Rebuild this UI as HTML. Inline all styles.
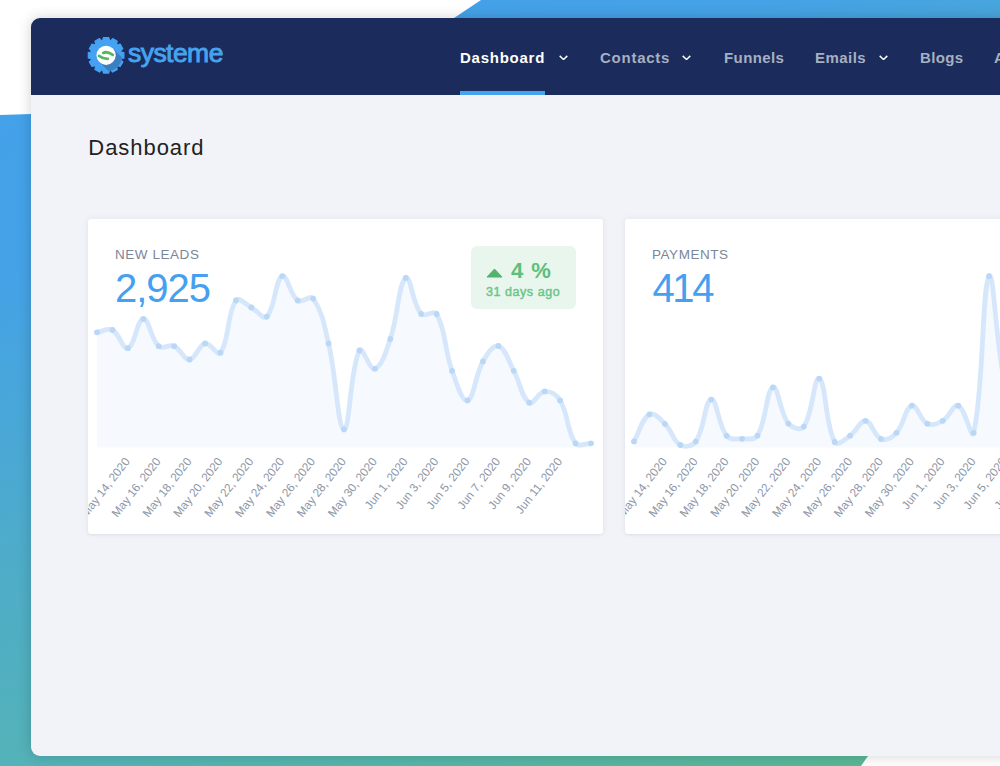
<!DOCTYPE html>
<html><head><meta charset="utf-8">
<style>
*{margin:0;padding:0;box-sizing:border-box}
html,body{width:1000px;height:766px;overflow:hidden;background:#fff;font-family:"Liberation Sans",sans-serif;position:relative}
.abs{position:absolute;white-space:nowrap;line-height:1}
.bg{position:absolute;left:0;top:0;width:1000px;height:766px;
  background:linear-gradient(160deg,#42a0ec 0%,#45a2e6 25%,#4eacc9 50%,#55b4b4 72%,#5ab891 100%);
  clip-path:polygon(481px 0,1000px 0,1000px 640px,868px 756px,861px 766px,0 766px,0 115px,31px 114px,454px 18px)}
.win{position:absolute;left:31px;top:18px;width:1200px;height:738px;background:#f1f3f8;border-radius:9px;overflow:hidden;
  box-shadow:0 0 14px rgba(0,0,0,0.18)}
.hdr{position:absolute;left:0;top:0;width:100%;height:76.5px;background:#1b2b5b}
.brand{font-size:26.5px;font-weight:normal;color:#46a3f0;letter-spacing:-0.55px;-webkit-text-stroke:0.9px #46a3f0}
.nav{font-size:15px;font-weight:bold;color:#a6b0c2;letter-spacing:0.75px}
.nav.act{color:#fff}
.chev{position:absolute;width:9px;height:5px}
.uline{position:absolute;left:459.8px;top:91px;width:85.4px;height:3.5px;background:#46a3f0}
.title{font-size:22px;color:#222;letter-spacing:0.95px}
.card{position:absolute;top:218.5px;width:514.5px;height:315px;background:#fff;border-radius:3px;box-shadow:0 0 6px rgba(30,45,80,0.07),0 1px 2px rgba(30,45,80,0.05)}
.clbl{font-size:13.5px;color:#7b8699;letter-spacing:0.55px}
.cval{font-size:40px;color:#46a0ef;letter-spacing:-1px}
.badge{position:absolute;left:471px;top:245.5px;width:105px;height:63px;background:#e8f6ee;border-radius:6px}
.pct{font-size:22px;font-weight:bold;color:#5cbf7a;letter-spacing:1px}
.ago{font-size:12.5px;font-weight:normal;color:#6cc588;letter-spacing:0.55px;-webkit-text-stroke:0.45px #6cc588}
svg.ch{position:absolute;left:0;top:0}
.lbl text{font-size:11.8px;fill:#8d97a8;font-family:"Liberation Sans",sans-serif}
</style></head><body>
<div class="bg"></div>
<div class="win"><div class="hdr"></div></div>
<svg class="abs" style="left:87px;top:36px" width="38" height="38" viewBox="0 0 38 38">
  <defs><clipPath id="gclip"><circle cx="19.10" cy="19.30" r="16.2"/></clipPath></defs>
  <path d="M15.52 4.94 L16.44 1.50 L21.76 1.50 L22.68 4.94 L23.18 5.07 L25.70 2.55 L30.31 5.21 L29.38 8.65 L29.75 9.02 L33.19 8.09 L35.85 12.70 L33.33 15.22 L33.46 15.72 L36.90 16.64 L36.90 21.96 L33.46 22.88 L33.33 23.38 L35.85 25.90 L33.19 30.51 L29.75 29.58 L29.38 29.95 L30.31 33.39 L25.70 36.05 L23.18 33.53 L22.68 33.66 L21.76 37.10 L16.44 37.10 L15.52 33.66 L15.02 33.53 L12.50 36.05 L7.89 33.39 L8.82 29.95 L8.45 29.58 L5.01 30.51 L2.35 25.90 L4.87 23.38 L4.74 22.88 L1.30 21.96 L1.30 16.64 L4.74 15.72 L4.87 15.22 L2.35 12.70 L5.01 8.09 L8.45 9.02 L8.82 8.65 L7.89 5.21 L12.50 2.55 L15.02 5.07Z" fill="#45a1f1" stroke="#45a1f1" stroke-width="1.2" stroke-linejoin="round"/>
  <path d="M12.31 26.09 L25.89 12.51 L40.03 26.65 L26.45 40.23 Z" fill="#3b7fc0" clip-path="url(#gclip)"/>
  <circle cx="19.10" cy="19.30" r="9.6" fill="#fff"/>
  <path d="M16.2 16.9 C18.8 15.6 22.5 16.6 25.8 18.8" fill="none" stroke="#55b85e" stroke-width="2.8" stroke-linecap="round"/>
  <path d="M12.0 19.9 C14.5 21.8 17.5 22.9 20.8 22.8" fill="none" stroke="#55b85e" stroke-width="2.8" stroke-linecap="round"/>
</svg>
<div class="abs brand" id="brand" style="left:128px;top:40px">systeme</div>
<div class="abs nav act" id="n1" style="left:460px;top:50px">Dashboard</div>
<svg class="chev" style="left:558.8px;top:55px" viewBox="0 0 9 5"><path d="M.7 .9L4.5 4.5L8.3 .9" fill="none" stroke="#fff" stroke-width="1.45"/></svg>
<div class="abs nav" id="n2" style="left:600px;top:50px">Contacts</div>
<svg class="chev" style="left:682px;top:55px" viewBox="0 0 9 5"><path d="M.7 .9L4.5 4.5L8.3 .9" fill="none" stroke="#fff" stroke-width="1.45"/></svg>
<div class="abs nav" id="n3" style="left:724px;top:50px;letter-spacing:0.4px">Funnels</div>
<div class="abs nav" id="n4" style="left:815px;top:50px;letter-spacing:0.45px">Emails</div>
<svg class="chev" style="left:878.5px;top:55px" viewBox="0 0 9 5"><path d="M.7 .9L4.5 4.5L8.3 .9" fill="none" stroke="#fff" stroke-width="1.45"/></svg>
<div class="abs nav" id="n5" style="left:920px;top:50px;letter-spacing:0.35px">Blogs</div>
<div class="abs nav" id="n6" style="left:994px;top:50px">A</div>
<div class="uline"></div>
<div class="abs title" id="title" style="left:88.3px;top:137px">Dashboard</div>
<div class="card" style="left:88px"></div>
<div class="card" style="left:625px"></div>
<div class="abs clbl" id="l1" style="left:115px;top:248px">NEW LEADS</div>
<div class="abs cval" id="v1" style="left:115px;top:267.5px">2,925</div>
<div class="badge"></div>
<svg class="abs" style="left:486px;top:268px" width="17" height="10" viewBox="0 0 17 10"><path d="M8.5 1L16 9H1Z" fill="#52b270" stroke="#52b270" stroke-width="1" stroke-linejoin="round"/></svg>
<div class="abs pct" id="pct" style="left:511px;top:260px">4 %</div>
<div class="abs ago" id="ago" style="left:486px;top:286px">31 days ago</div>
<div class="abs clbl" id="l2" style="left:652px;top:248px">PAYMENTS</div>
<div class="abs cval" id="v2" style="left:652.5px;top:267.5px;letter-spacing:-2.4px">414</div>
<svg class="ch" width="1000" height="766">
<defs><clipPath id="c1"><rect x="88" y="218" width="514" height="315"/></clipPath><clipPath id="c2"><rect x="625" y="218" width="514" height="315"/></clipPath></defs>
<g clip-path="url(#c1)"><path d="M97.00 332.30 C103.17 331.38 107.55 327.49 112.44 330.00 C119.90 333.85 122.69 350.05 127.88 348.20 C135.04 345.65 136.97 319.41 143.31 319.00 C149.32 318.61 150.48 338.92 158.75 346.20 C162.83 349.80 168.86 343.91 174.19 346.20 C181.21 349.23 183.72 360.02 189.62 359.50 C196.07 358.94 198.23 345.00 205.06 343.50 C210.58 342.28 217.43 356.97 220.50 352.70 C229.78 339.77 226.52 314.29 235.94 300.50 C238.87 296.21 245.37 304.37 251.38 307.50 C257.72 310.81 263.19 320.27 266.81 316.60 C275.54 307.75 274.84 280.07 282.25 276.20 C287.19 273.63 289.67 294.68 297.69 300.50 C302.02 303.64 310.08 294.36 313.12 298.60 C322.43 311.56 324.21 325.07 328.56 343.50 C336.56 377.39 337.57 427.94 344.00 429.40 C349.92 430.74 349.92 369.18 359.44 350.50 C362.27 344.94 369.73 370.72 374.88 368.80 C382.08 366.12 386.02 351.63 390.31 339.00 C398.37 315.31 398.14 284.16 405.75 278.00 C410.49 274.16 412.33 303.67 421.19 314.00 C424.68 318.07 434.06 309.28 436.62 314.00 C446.41 332.00 444.18 348.75 452.06 370.80 C456.53 383.31 462.02 402.05 467.50 400.40 C474.37 398.33 474.83 375.79 482.94 361.50 C487.18 354.03 493.09 344.41 498.38 346.00 C505.44 348.13 508.23 360.55 513.81 370.80 C520.58 383.23 521.23 397.35 529.25 402.70 C533.58 405.59 538.30 391.88 544.69 391.40 C550.65 390.96 556.65 394.55 560.12 400.40 C569.00 415.31 566.34 430.48 575.56 443.30 C578.69 447.50 584.83 443.30 591.00 443.30 L591.00 447.50 L97.00 447.50 Z" fill="#f6f9fe"/><path d="M97.00 332.30 C103.17 331.38 107.55 327.49 112.44 330.00 C119.90 333.85 122.69 350.05 127.88 348.20 C135.04 345.65 136.97 319.41 143.31 319.00 C149.32 318.61 150.48 338.92 158.75 346.20 C162.83 349.80 168.86 343.91 174.19 346.20 C181.21 349.23 183.72 360.02 189.62 359.50 C196.07 358.94 198.23 345.00 205.06 343.50 C210.58 342.28 217.43 356.97 220.50 352.70 C229.78 339.77 226.52 314.29 235.94 300.50 C238.87 296.21 245.37 304.37 251.38 307.50 C257.72 310.81 263.19 320.27 266.81 316.60 C275.54 307.75 274.84 280.07 282.25 276.20 C287.19 273.63 289.67 294.68 297.69 300.50 C302.02 303.64 310.08 294.36 313.12 298.60 C322.43 311.56 324.21 325.07 328.56 343.50 C336.56 377.39 337.57 427.94 344.00 429.40 C349.92 430.74 349.92 369.18 359.44 350.50 C362.27 344.94 369.73 370.72 374.88 368.80 C382.08 366.12 386.02 351.63 390.31 339.00 C398.37 315.31 398.14 284.16 405.75 278.00 C410.49 274.16 412.33 303.67 421.19 314.00 C424.68 318.07 434.06 309.28 436.62 314.00 C446.41 332.00 444.18 348.75 452.06 370.80 C456.53 383.31 462.02 402.05 467.50 400.40 C474.37 398.33 474.83 375.79 482.94 361.50 C487.18 354.03 493.09 344.41 498.38 346.00 C505.44 348.13 508.23 360.55 513.81 370.80 C520.58 383.23 521.23 397.35 529.25 402.70 C533.58 405.59 538.30 391.88 544.69 391.40 C550.65 390.96 556.65 394.55 560.12 400.40 C569.00 415.31 566.34 430.48 575.56 443.30 C578.69 447.50 584.83 443.30 591.00 443.30" fill="none" stroke="#d6e7fc" stroke-width="4.8" stroke-linejoin="round" stroke-linecap="round"/><circle cx="97.00" cy="332.30" r="2.9" fill="#bad7f5"/><circle cx="112.44" cy="330.00" r="2.9" fill="#bad7f5"/><circle cx="127.88" cy="348.20" r="2.9" fill="#bad7f5"/><circle cx="143.31" cy="319.00" r="2.9" fill="#bad7f5"/><circle cx="158.75" cy="346.20" r="2.9" fill="#bad7f5"/><circle cx="174.19" cy="346.20" r="2.9" fill="#bad7f5"/><circle cx="189.62" cy="359.50" r="2.9" fill="#bad7f5"/><circle cx="205.06" cy="343.50" r="2.9" fill="#bad7f5"/><circle cx="220.50" cy="352.70" r="2.9" fill="#bad7f5"/><circle cx="235.94" cy="300.50" r="2.9" fill="#bad7f5"/><circle cx="251.38" cy="307.50" r="2.9" fill="#bad7f5"/><circle cx="266.81" cy="316.60" r="2.9" fill="#bad7f5"/><circle cx="282.25" cy="276.20" r="2.9" fill="#bad7f5"/><circle cx="297.69" cy="300.50" r="2.9" fill="#bad7f5"/><circle cx="313.12" cy="298.60" r="2.9" fill="#bad7f5"/><circle cx="328.56" cy="343.50" r="2.9" fill="#bad7f5"/><circle cx="344.00" cy="429.40" r="2.9" fill="#bad7f5"/><circle cx="359.44" cy="350.50" r="2.9" fill="#bad7f5"/><circle cx="374.88" cy="368.80" r="2.9" fill="#bad7f5"/><circle cx="390.31" cy="339.00" r="2.9" fill="#bad7f5"/><circle cx="405.75" cy="278.00" r="2.9" fill="#bad7f5"/><circle cx="421.19" cy="314.00" r="2.9" fill="#bad7f5"/><circle cx="436.62" cy="314.00" r="2.9" fill="#bad7f5"/><circle cx="452.06" cy="370.80" r="2.9" fill="#bad7f5"/><circle cx="467.50" cy="400.40" r="2.9" fill="#bad7f5"/><circle cx="482.94" cy="361.50" r="2.9" fill="#bad7f5"/><circle cx="498.38" cy="346.00" r="2.9" fill="#bad7f5"/><circle cx="513.81" cy="370.80" r="2.9" fill="#bad7f5"/><circle cx="529.25" cy="402.70" r="2.9" fill="#bad7f5"/><circle cx="544.69" cy="391.40" r="2.9" fill="#bad7f5"/><circle cx="560.12" cy="400.40" r="2.9" fill="#bad7f5"/><circle cx="575.56" cy="443.30" r="2.9" fill="#bad7f5"/><circle cx="591.00" cy="443.30" r="2.9" fill="#bad7f5"/><g class="lbl"><text transform="translate(127.08 459.00) rotate(-52.00)" text-anchor="end" dy="0.36em">May 14, 2020</text><text transform="translate(157.95 459.00) rotate(-52.00)" text-anchor="end" dy="0.36em">May 16, 2020</text><text transform="translate(188.82 459.00) rotate(-52.00)" text-anchor="end" dy="0.36em">May 18, 2020</text><text transform="translate(219.70 459.00) rotate(-52.00)" text-anchor="end" dy="0.36em">May 20, 2020</text><text transform="translate(250.57 459.00) rotate(-52.00)" text-anchor="end" dy="0.36em">May 22, 2020</text><text transform="translate(281.45 459.00) rotate(-52.00)" text-anchor="end" dy="0.36em">May 24, 2020</text><text transform="translate(312.32 459.00) rotate(-52.00)" text-anchor="end" dy="0.36em">May 26, 2020</text><text transform="translate(343.20 459.00) rotate(-52.00)" text-anchor="end" dy="0.36em">May 28, 2020</text><text transform="translate(374.07 459.00) rotate(-52.00)" text-anchor="end" dy="0.36em">May 30, 2020</text><text transform="translate(404.95 459.00) rotate(-52.00)" text-anchor="end" dy="0.36em">Jun 1, 2020</text><text transform="translate(435.82 459.00) rotate(-52.00)" text-anchor="end" dy="0.36em">Jun 3, 2020</text><text transform="translate(466.70 459.00) rotate(-52.00)" text-anchor="end" dy="0.36em">Jun 5, 2020</text><text transform="translate(497.57 459.00) rotate(-52.00)" text-anchor="end" dy="0.36em">Jun 7, 2020</text><text transform="translate(528.45 459.00) rotate(-52.00)" text-anchor="end" dy="0.36em">Jun 9, 2020</text><text transform="translate(559.33 459.00) rotate(-52.00)" text-anchor="end" dy="0.36em">Jun 11, 2020</text></g></g><g clip-path="url(#c2)"><path d="M634.00 441.40 C640.17 430.60 641.63 418.85 649.44 414.40 C653.98 411.81 659.84 418.81 664.88 423.80 C672.19 431.05 672.61 440.56 680.31 445.00 C684.96 447.50 692.53 446.34 695.75 441.60 C704.88 428.18 704.62 400.83 711.19 399.60 C716.97 398.51 717.80 424.60 726.62 435.80 C730.15 440.28 735.90 438.84 742.06 438.80 C748.25 438.76 754.57 440.48 757.50 435.60 C766.92 419.92 765.99 390.10 772.94 387.40 C778.34 385.30 779.55 412.40 788.38 423.60 C791.90 428.08 800.88 430.88 803.81 426.60 C813.23 412.88 813.87 375.91 819.25 378.60 C826.22 382.07 824.85 423.81 834.69 442.00 C837.20 446.65 844.72 439.41 850.12 435.70 C857.07 430.93 859.71 420.19 865.56 420.80 C872.06 421.47 873.73 436.07 881.00 438.90 C886.08 440.87 892.15 437.41 896.44 432.80 C904.50 424.13 904.86 407.77 911.88 405.70 C917.21 404.13 919.88 420.07 927.31 423.70 C932.23 426.11 937.55 423.83 942.75 420.80 C949.90 416.63 953.13 403.74 958.19 405.70 C965.48 408.54 971.58 441.37 973.62 432.80 C983.93 389.57 981.71 288.30 989.06 276.20 C994.06 270.00 995.29 340.59 1004.50 382.00 C1007.64 396.11 1012.64 402.48 1019.94 415.00 C1024.99 423.68 1027.85 428.91 1035.38 435.00 C1040.20 438.91 1045.02 440.94 1050.81 440.00 C1057.37 438.94 1059.90 430.41 1066.25 430.00 C1072.25 429.61 1075.17 435.89 1081.69 438.00 C1087.52 439.89 1090.95 439.20 1097.12 440.00 C1103.30 440.80 1106.36 441.60 1112.56 442.00 C1118.71 442.40 1121.83 442.00 1128.00 442.00 L1128.00 447.50 L634.00 447.50 Z" fill="#f6f9fe"/><path d="M634.00 441.40 C640.17 430.60 641.63 418.85 649.44 414.40 C653.98 411.81 659.84 418.81 664.88 423.80 C672.19 431.05 672.61 440.56 680.31 445.00 C684.96 447.50 692.53 446.34 695.75 441.60 C704.88 428.18 704.62 400.83 711.19 399.60 C716.97 398.51 717.80 424.60 726.62 435.80 C730.15 440.28 735.90 438.84 742.06 438.80 C748.25 438.76 754.57 440.48 757.50 435.60 C766.92 419.92 765.99 390.10 772.94 387.40 C778.34 385.30 779.55 412.40 788.38 423.60 C791.90 428.08 800.88 430.88 803.81 426.60 C813.23 412.88 813.87 375.91 819.25 378.60 C826.22 382.07 824.85 423.81 834.69 442.00 C837.20 446.65 844.72 439.41 850.12 435.70 C857.07 430.93 859.71 420.19 865.56 420.80 C872.06 421.47 873.73 436.07 881.00 438.90 C886.08 440.87 892.15 437.41 896.44 432.80 C904.50 424.13 904.86 407.77 911.88 405.70 C917.21 404.13 919.88 420.07 927.31 423.70 C932.23 426.11 937.55 423.83 942.75 420.80 C949.90 416.63 953.13 403.74 958.19 405.70 C965.48 408.54 971.58 441.37 973.62 432.80 C983.93 389.57 981.71 288.30 989.06 276.20 C994.06 270.00 995.29 340.59 1004.50 382.00 C1007.64 396.11 1012.64 402.48 1019.94 415.00 C1024.99 423.68 1027.85 428.91 1035.38 435.00 C1040.20 438.91 1045.02 440.94 1050.81 440.00 C1057.37 438.94 1059.90 430.41 1066.25 430.00 C1072.25 429.61 1075.17 435.89 1081.69 438.00 C1087.52 439.89 1090.95 439.20 1097.12 440.00 C1103.30 440.80 1106.36 441.60 1112.56 442.00 C1118.71 442.40 1121.83 442.00 1128.00 442.00" fill="none" stroke="#d6e7fc" stroke-width="4.8" stroke-linejoin="round" stroke-linecap="round"/><circle cx="634.00" cy="441.40" r="2.9" fill="#bad7f5"/><circle cx="649.44" cy="414.40" r="2.9" fill="#bad7f5"/><circle cx="664.88" cy="423.80" r="2.9" fill="#bad7f5"/><circle cx="680.31" cy="445.00" r="2.9" fill="#bad7f5"/><circle cx="695.75" cy="441.60" r="2.9" fill="#bad7f5"/><circle cx="711.19" cy="399.60" r="2.9" fill="#bad7f5"/><circle cx="726.62" cy="435.80" r="2.9" fill="#bad7f5"/><circle cx="742.06" cy="438.80" r="2.9" fill="#bad7f5"/><circle cx="757.50" cy="435.60" r="2.9" fill="#bad7f5"/><circle cx="772.94" cy="387.40" r="2.9" fill="#bad7f5"/><circle cx="788.38" cy="423.60" r="2.9" fill="#bad7f5"/><circle cx="803.81" cy="426.60" r="2.9" fill="#bad7f5"/><circle cx="819.25" cy="378.60" r="2.9" fill="#bad7f5"/><circle cx="834.69" cy="442.00" r="2.9" fill="#bad7f5"/><circle cx="850.12" cy="435.70" r="2.9" fill="#bad7f5"/><circle cx="865.56" cy="420.80" r="2.9" fill="#bad7f5"/><circle cx="881.00" cy="438.90" r="2.9" fill="#bad7f5"/><circle cx="896.44" cy="432.80" r="2.9" fill="#bad7f5"/><circle cx="911.88" cy="405.70" r="2.9" fill="#bad7f5"/><circle cx="927.31" cy="423.70" r="2.9" fill="#bad7f5"/><circle cx="942.75" cy="420.80" r="2.9" fill="#bad7f5"/><circle cx="958.19" cy="405.70" r="2.9" fill="#bad7f5"/><circle cx="973.62" cy="432.80" r="2.9" fill="#bad7f5"/><circle cx="989.06" cy="276.20" r="2.9" fill="#bad7f5"/><circle cx="1004.50" cy="382.00" r="2.9" fill="#bad7f5"/><circle cx="1019.94" cy="415.00" r="2.9" fill="#bad7f5"/><circle cx="1035.38" cy="435.00" r="2.9" fill="#bad7f5"/><circle cx="1050.81" cy="440.00" r="2.9" fill="#bad7f5"/><circle cx="1066.25" cy="430.00" r="2.9" fill="#bad7f5"/><circle cx="1081.69" cy="438.00" r="2.9" fill="#bad7f5"/><circle cx="1097.12" cy="440.00" r="2.9" fill="#bad7f5"/><circle cx="1112.56" cy="442.00" r="2.9" fill="#bad7f5"/><circle cx="1128.00" cy="442.00" r="2.9" fill="#bad7f5"/><g class="lbl"><text transform="translate(664.08 459.00) rotate(-52.00)" text-anchor="end" dy="0.36em">May 14, 2020</text><text transform="translate(694.95 459.00) rotate(-52.00)" text-anchor="end" dy="0.36em">May 16, 2020</text><text transform="translate(725.83 459.00) rotate(-52.00)" text-anchor="end" dy="0.36em">May 18, 2020</text><text transform="translate(756.70 459.00) rotate(-52.00)" text-anchor="end" dy="0.36em">May 20, 2020</text><text transform="translate(787.58 459.00) rotate(-52.00)" text-anchor="end" dy="0.36em">May 22, 2020</text><text transform="translate(818.45 459.00) rotate(-52.00)" text-anchor="end" dy="0.36em">May 24, 2020</text><text transform="translate(849.33 459.00) rotate(-52.00)" text-anchor="end" dy="0.36em">May 26, 2020</text><text transform="translate(880.20 459.00) rotate(-52.00)" text-anchor="end" dy="0.36em">May 28, 2020</text><text transform="translate(911.08 459.00) rotate(-52.00)" text-anchor="end" dy="0.36em">May 30, 2020</text><text transform="translate(941.95 459.00) rotate(-52.00)" text-anchor="end" dy="0.36em">Jun 1, 2020</text><text transform="translate(972.83 459.00) rotate(-52.00)" text-anchor="end" dy="0.36em">Jun 3, 2020</text><text transform="translate(1003.70 459.00) rotate(-52.00)" text-anchor="end" dy="0.36em">Jun 5, 2020</text><text transform="translate(1034.58 459.00) rotate(-52.00)" text-anchor="end" dy="0.36em">Jun 7, 2020</text><text transform="translate(1065.45 459.00) rotate(-52.00)" text-anchor="end" dy="0.36em">Jun 9, 2020</text><text transform="translate(1096.33 459.00) rotate(-52.00)" text-anchor="end" dy="0.36em">Jun 11, 2020</text></g></g></svg>
</body></html>
